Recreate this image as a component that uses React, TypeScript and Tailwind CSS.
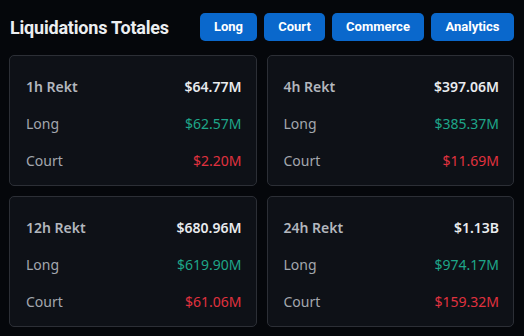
import React from "react";

const cards = [
  { t: "1h Rekt", total: "$64.77M", long: "$62.57M", short: "$2.20M" },
  { t: "4h Rekt", total: "$397.06M", long: "$385.37M", short: "$11.69M" },
  { t: "12h Rekt", total: "$680.96M", long: "$619.90M", short: "$61.06M" },
  { t: "24h Rekt", total: "$1.13B", long: "$974.17M", short: "$159.32M" },
];

const buttons = [
  { l: "Long", w: "w-[57px]" },
  { l: "Court", w: "w-[61px]" },
  { l: "Commerce", w: "w-[92px]" },
  { l: "Analytics", w: "w-[83px]" },
];

export default function App() {
  return (
    <div
      className="w-[524px] h-[336px] bg-[#05070b] overflow-hidden"
      style={{ fontFamily: '"Noto Sans", "Open Sans", sans-serif' }}
    >
      <div className="flex items-center justify-between pl-[10px] pr-[10px] h-[55px] pb-[1px]">
        <h1 className="whitespace-nowrap text-[18px] font-bold text-[#eceef1] tracking-[-0.2px] font-[Roboto,sans-serif]">
          Liquidations Totales
        </h1>
        <div className="flex gap-[7px] shrink-0">
          {buttons.map((b) => (
            <button
              key={b.l}
              className={`${b.w} h-[28px] rounded-[5px] bg-[#0a68cc] text-white text-[13px] font-bold font-[Roboto,sans-serif] whitespace-nowrap`}
            >
              {b.l}
            </button>
          ))}
        </div>
      </div>
      <div className="grid grid-cols-2 gap-[10px] pl-[9px] pr-[10px]">
        {cards.map((c) => (
          <div
            key={c.t}
            className="h-[131px] rounded-[5px] border border-[#2c2f36] bg-[#0e1117] pl-[16px] pr-[14px] pt-[19px] flex flex-col gap-[15px]"
          >
            <div className="flex justify-between items-center h-[22px]">
              <span className="text-[14px] font-semibold text-[#b3b7be]">{c.t}</span>
              <span className="text-[14px] font-semibold text-[#e9ebee]">{c.total}</span>
            </div>
            <div className="flex justify-between items-center h-[22px]">
              <span className="text-[14px] text-[#a3a7ae]">Long</span>
              <span className="text-[14px] text-[#1ea689]">{c.long}</span>
            </div>
            <div className="flex justify-between items-center h-[22px]">
              <span className="text-[14px] text-[#a3a7ae]">Court</span>
              <span className="text-[14px] text-[#e0323f]">{c.short}</span>
            </div>
          </div>
        ))}
      </div>
    </div>
  );
}
